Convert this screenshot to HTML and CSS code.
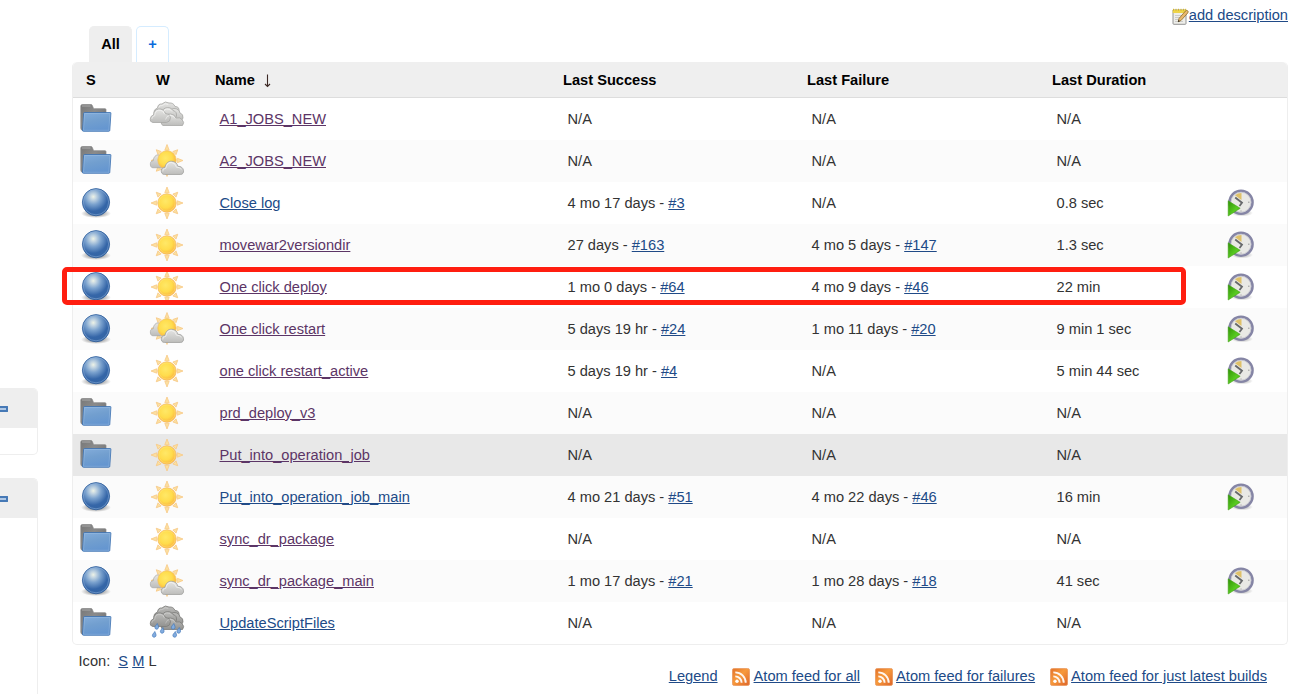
FILE: index.html
```html
<!DOCTYPE html>
<html lang="en">
<head>
<meta charset="utf-8">
<title>Jobs [Jenkins]</title>
<link rel="stylesheet" href="styles.css">
</head>
<body>
<svg class="defs" width="0" height="0" aria-hidden="true">
  <defs>
    <linearGradient id="gBack" x1="0" y1="0" x2="1" y2="1"><stop offset="0" stop-color="#777"/><stop offset=".4" stop-color="#8b8b8b"/><stop offset="1" stop-color="#666"/></linearGradient>
    <linearGradient id="gFront" x1="0" y1="0" x2=".3" y2="1"><stop offset="0" stop-color="#84addb"/><stop offset=".5" stop-color="#729fcf"/><stop offset="1" stop-color="#6596d0"/></linearGradient>
    <radialGradient id="gBall" cx=".4" cy=".3" r=".68"><stop offset="0" stop-color="#eef3e6"/><stop offset=".16" stop-color="#c3d5e2"/><stop offset=".42" stop-color="#7ba2ce"/><stop offset=".78" stop-color="#3566a8"/><stop offset="1" stop-color="#3465a4"/></radialGradient>
    <radialGradient id="gShade"><stop offset="0" stop-color="#000" stop-opacity=".6"/><stop offset="1" stop-color="#000" stop-opacity="0"/></radialGradient>
    <radialGradient id="gSun" cx=".42" cy=".4" r=".6"><stop offset="0" stop-color="#ffe867"/><stop offset=".6" stop-color="#ffdc4c"/><stop offset="1" stop-color="#fbb540"/></radialGradient>
    <linearGradient id="gCloud" x1="0" y1="0" x2="0" y2="1"><stop offset="0" stop-color="#e6e6e4"/><stop offset="1" stop-color="#bdbdbb"/></linearGradient>
    <linearGradient id="gDark" x1="0" y1="0" x2="0" y2="1"><stop offset="0" stop-color="#bdbdbb"/><stop offset="1" stop-color="#929290"/></linearGradient>
    <linearGradient id="gPlay" x1="0" y1="0" x2="1" y2="1"><stop offset="0" stop-color="#2f9404"/><stop offset=".6" stop-color="#59cb22"/><stop offset="1" stop-color="#3c9b12"/></linearGradient>
    <linearGradient id="gRss" x1="0" y1="0" x2="1" y2="1"><stop offset="0" stop-color="#e27129"/><stop offset=".45" stop-color="#f79a3c"/><stop offset="1" stop-color="#dd6329"/></linearGradient>
    <g id="rays" fill="#fce0a0" stroke="#f7c987" stroke-width=".8">
      <path id="ray" d="M-2.200-10.300 0-16 2.200-10.300z"/>
      <path id="ray2" d="M-2.200-10.500 0-15.200 2.200-10.500z" transform="rotate(45)"/><use href="#ray" transform="rotate(90)"/>
      <use href="#ray2" transform="rotate(90)"/><use href="#ray" transform="rotate(180)"/>
      <use href="#ray2" transform="rotate(180)"/><use href="#ray" transform="rotate(270)"/>
      <use href="#ray2" transform="rotate(270)"/>
    </g>
    <path id="puff" d="M4 14C1.500 14 .5 12 .8 9.800 1 7.800 2.500 6.800 4.500 7 5 3 8 .8 11.200 1c3.300.2 5.600 2.200 6.200 5 3-.2 5.200 1.500 5.600 4 .3 2-.6 4-3 4z"/>
    <g id="bank">
      <path d="M5.500 14Q3.500 9 8.500 7 9 2.500 13 3 16-.5 20 2q4.500-.5 6 3.500 4.500 0 4 4.500 1 2-1 4.500z"/>
      <path d="M20 13q0-5 5-5.500 5 0 6 4.500 3.500 1 3 5-.5 3-4 2.500z"/>
      <path d="M13 14q-1-5.500 3.500-7 5-1.500 7.500 2.500 4 1 3.500 5.500-1 4-5 4z"/>
      <path d="M14 24.500q-2.500-1-1.500-4 .5-2.500 3.500-3 1-4.500 5.500-4.500 4 0 5.500 4 4-1 6 1.500 3 3 .5 6z"/>
      <path d="M4 21.500q-3.500-.5-2.500-4.500.5-2.500 3-3Q5 8.500 9.500 8q5-.5 7 4.500 4.500 0 5 4 0 4.500-4 5z"/>
    </g>
    <path id="shine" d="M2.800 18q0-2.800 2.900-3.200Q6 9.700 9.800 9.200q4-.2 5.800 4M14.500 11.500q0-3 3-3.500 4-.5 5.500 2.500M9.800 6.500q1-2.500 3.500-2 3-3 6-1M16.500 18.500q1-4 5-4.200 3 .2 4.500 3" fill="none" stroke="#fff"/>
    <path id="drop" d="M2.800 0C3.600 2 4.600 3.400 3.700 4.900 2.600 6.300.4 5.800.4 4c0-1.500 1.400-2.200 2.400-4z" fill="#82acdf" stroke="#4378b9" stroke-width=".7"/>
  </defs>
  <symbol id="folder" viewBox="0 0 32 32">
    <path d="M.8 3Q.8 1.500 2.300 1.500H11q1 0 1.300 1l1 2.500q.3.700 1 .7H25q1 0 1 1V27H2Q.8 27 .8 25z" fill="url(#gBack)" stroke="#858585" stroke-width=".7"/>
    <path d="M2 3h8.500" stroke="#aaa" fill="none"/>
    <path d="M4.500 9.500H30.300q.7 0 .6.800L29.800 27.300q-.1 1-1 1H3.500q-1.300 0-1-1.300L3.600 10.300q.1-.8.900-.8z" fill="url(#gFront)" stroke="#3b70b0" stroke-width=".8"/>
    <path d="M4.600 10.500H29.900L28.900 27.300H3.500z" fill="none" stroke="#a3c3e7" stroke-opacity=".5" stroke-width=".8"/>
  </symbol>
  <symbol id="ball" viewBox="0 0 32 32">
    <ellipse cx="16" cy="26.500" rx="15" ry="4.500" fill="url(#gShade)"/>
    <circle cx="16" cy="15.200" r="13.600" fill="url(#gBall)" stroke="#2d5d9b" stroke-width=".8"/>
    <circle cx="16" cy="15.200" r="12.600" fill="none" stroke="#8fb2dc" stroke-opacity=".5"/>
  </symbol>
  <symbol id="sun" viewBox="0 0 36 36">
    <use href="#rays" x="18" y="18"/>
    <circle cx="18" cy="18" r="9.200" fill="url(#gSun)" stroke="#f5b85e" stroke-width=".8"/>
    <circle cx="18" cy="18" r="8.200" fill="none" stroke="#ffe784" stroke-opacity=".6" stroke-width=".8"/>
  </symbol>
  <symbol id="partly" viewBox="0 0 36 36">
    <use href="#rays" x="18" y="17.500"/>
    <use href="#puff" transform="translate(.8 11) scale(.75 .98)" fill="url(#gCloud)" stroke="#a5a5a3" stroke-width=".8"/>
    <circle cx="18" cy="17" r="9.200" fill="url(#gSun)" stroke="#f5c35b" stroke-width=".8"/>
    <use href="#puff" transform="translate(11.500 17.200) scale(1 1.020)" fill="url(#gCloud)" stroke="#a0a09e" stroke-width=".8"/>
    <path d="M13.800 28.500q-.5-3 3-3.200 1-6 5.700-5.800 4 .4 5 4.700 3.500-.3 4.800 2.300" fill="none" stroke="#fff" stroke-opacity=".6" stroke-width=".9"/>
  </symbol>
  <symbol id="cloudy" viewBox="0 0 36 36">
    <use href="#bank" fill="url(#gCloud)" stroke="#a8a8a6" stroke-width=".8"/>
    <use href="#shine" opacity=".5"/>
  </symbol>
  <symbol id="rain" viewBox="0 0 36 36">
    <use href="#bank" fill="url(#gDark)" stroke="#7c7c7a" stroke-width=".8"/>
    <use href="#shine" opacity=".25"/>
    <use href="#drop" x="5.500" y="18.500"/><use href="#drop" x="11" y="22.500"/><use href="#drop" x="22" y="18.500"/><use href="#drop" x="27.500" y="22.500"/><use href="#drop" x="3" y="26.500"/><use href="#drop" x="23.500" y="26.500"/>
  </symbol>
  <symbol id="clock" viewBox="0 0 28 28">
    <ellipse cx="15" cy="24" rx="11" ry="3.500" fill="url(#gShade)" opacity=".6"/>
    <circle cx="14" cy="13.200" r="11.500" fill="#e9e9e5" stroke="#8585a5" stroke-width="2.600"/>
    <circle cx="14" cy="13.200" r="10" fill="none" stroke="#c6c6cf" stroke-width=".8"/>
    <path d="M14.500 11 8 6.300Q10.500 4 14.500 4z" fill="#dfc169"/>
    <path d="m8.200 8.500 6.800 5.200-2.500 3.300" fill="none" stroke="#66686a" stroke-width="1.800"/>
    <path d="M21 13.200h1.500M14 21.500v1" stroke="#999"/>
    <path d="M1.200 11.800 13.200 19.300 1.200 27z" fill="url(#gPlay)" stroke="#48a51b" stroke-width=".6"/>
  </symbol>
  <symbol id="rss" viewBox="0 0 18 18">
    <rect x=".4" y=".4" width="17.200" height="17.200" rx="2" fill="url(#gRss)" stroke="#e9965a" stroke-width=".8"/>
    <circle cx="5" cy="13.200" r="1.700" fill="#fff"/>
    <path d="M3.300 8.400a6.300 6.300 0 0 1 6.300 6.300M3.300 4.400a10.400 10.400 0 0 1 10.400 10.400" fill="none" stroke="#fff" stroke-width="1.900" stroke-opacity=".92"/>
  </symbol>
</svg>

<aside class="side">
  <div class="pane short"><div class="pane-head"><i class="collapse"></i></div></div>
  <div class="pane tall"><div class="pane-head"><i class="collapse"></i></div></div>
</aside>

<main class="main">
  <div class="describe">
    <svg width="17" height="17" viewBox="0 0 17 17"><path d="M1 2h13v13.500q0 .8-.8.800H1.800q-.8 0-.8-.8z" fill="#eeeeea" stroke="#888" stroke-width=".9"/><path d="M.7 1.800h13.500V5H.7z" fill="#edd44a"/><path d="M1.500.8v2M4 .8v2M6.500.8v2M9 .8v2M11.500.8v2M13.700.8v2" stroke="#d3b52b"/><path d="M3 7.500h7M3 9.500h5M3 11.500h4M3 13.500h8" stroke="#bbb" stroke-width=".7"/><path d="m6.200 13.800.8-3.300L13.500 3q1.200-1 2.200-.2 1 .9.100 2.100L9.200 12.300z" fill="#e9b96e" stroke="#8f6b26" stroke-width=".8"/><path d="m6 14 .5-2 1.400 1.200z" fill="#222"/></svg><a href="#">add description</a>
  </div>
  <nav class="tabs"><a class="tab active">All</a><a class="tab add">+</a></nav>
  <section class="jobs">
    <div class="row head"><b>S</b><b>W</b><b>Name&nbsp; <svg class="sort" width="9" height="14" viewBox="0 0 9 14"><path d="M4.500.5v12M2 10l2.500 2.500L7 10" fill="none" stroke="#3d2925" stroke-width="1.100"/></svg></b><b>Last Success</b><b>Last Failure</b><b>Last Duration</b><b></b></div>
    <div class="row"><svg class="s"><use href="#folder"/></svg><svg class="w"><use href="#cloudy"/></svg><span><a class="seen" href="#">A1_JOBS_NEW</a></span><span>N/A</span><span>N/A</span><span>N/A</span></div>
    <div class="row"><svg class="s"><use href="#folder"/></svg><svg class="w"><use href="#partly"/></svg><span><a class="seen" href="#">A2_JOBS_NEW</a></span><span>N/A</span><span>N/A</span><span>N/A</span></div>
    <div class="row"><svg class="s"><use href="#ball"/></svg><svg class="w"><use href="#sun"/></svg><span><a href="#">Close log</a></span><span>4 mo 17 days - <a href="#">#3</a></span><span>N/A</span><span>0.8 sec</span><svg class="c"><use href="#clock"/></svg></div>
    <div class="row"><svg class="s"><use href="#ball"/></svg><svg class="w"><use href="#sun"/></svg><span><a class="seen" href="#">movewar2versiondir</a></span><span>27 days - <a href="#">#163</a></span><span>4 mo 5 days - <a href="#">#147</a></span><span>1.3 sec</span><svg class="c"><use href="#clock"/></svg></div>
    <div class="row marked"><svg class="s"><use href="#ball"/></svg><svg class="w"><use href="#sun"/></svg><span><a class="seen" href="#">One click deploy</a></span><span>1 mo 0 days - <a href="#">#64</a></span><span>4 mo 9 days - <a href="#">#46</a></span><span>22 min</span><svg class="c"><use href="#clock"/></svg></div>
    <div class="row"><svg class="s"><use href="#ball"/></svg><svg class="w"><use href="#partly"/></svg><span><a class="seen" href="#">One click restart</a></span><span>5 days 19 hr - <a href="#">#24</a></span><span>1 mo 11 days - <a href="#">#20</a></span><span>9 min 1 sec</span><svg class="c"><use href="#clock"/></svg></div>
    <div class="row"><svg class="s"><use href="#ball"/></svg><svg class="w"><use href="#sun"/></svg><span><a class="seen" href="#">one click restart_active</a></span><span>5 days 19 hr - <a href="#">#4</a></span><span>N/A</span><span>5 min 44 sec</span><svg class="c"><use href="#clock"/></svg></div>
    <div class="row"><svg class="s"><use href="#folder"/></svg><svg class="w"><use href="#sun"/></svg><span><a class="seen" href="#">prd_deploy_v3</a></span><span>N/A</span><span>N/A</span><span>N/A</span></div>
    <div class="row hover"><svg class="s"><use href="#folder"/></svg><svg class="w"><use href="#sun"/></svg><span><a class="seen" href="#">Put_into_operation_job</a></span><span>N/A</span><span>N/A</span><span>N/A</span></div>
    <div class="row"><svg class="s"><use href="#ball"/></svg><svg class="w"><use href="#sun"/></svg><span><a href="#">Put_into_operation_job_main</a></span><span>4 mo 21 days - <a href="#">#51</a></span><span>4 mo 22 days - <a href="#">#46</a></span><span>16 min</span><svg class="c"><use href="#clock"/></svg></div>
    <div class="row"><svg class="s"><use href="#folder"/></svg><svg class="w"><use href="#sun"/></svg><span><a class="seen" href="#">sync_dr_package</a></span><span>N/A</span><span>N/A</span><span>N/A</span></div>
    <div class="row"><svg class="s"><use href="#ball"/></svg><svg class="w"><use href="#partly"/></svg><span><a class="seen" href="#">sync_dr_package_main</a></span><span>1 mo 17 days - <a href="#">#21</a></span><span>1 mo 28 days - <a href="#">#18</a></span><span>41 sec</span><svg class="c"><use href="#clock"/></svg></div>
    <div class="row"><svg class="s"><use href="#folder"/></svg><svg class="w"><use href="#rain"/></svg><span><a href="#">UpdateScriptFiles</a></span><span>N/A</span><span>N/A</span><span>N/A</span></div>
  </section>
  <footer class="foot">
    <div class="sizes">Icon: &nbsp;<a href="#">S</a> <a href="#">M</a> L</div>
    <div class="feeds"><a href="#">Legend</a><span class="feed"><svg><use href="#rss"/></svg><a href="#">Atom feed for all</a></span><span class="feed"><svg><use href="#rss"/></svg><a href="#">Atom feed for failures</a></span><span class="feed"><svg><use href="#rss"/></svg><a href="#">Atom feed for just latest builds</a></span></div>
  </footer>
</main>
</body>
</html>
```
FILE: styles.css
```css
*, *::after { box-sizing: border-box; }
body {
  margin: 0;
  height: 694px;
  overflow: hidden;
  display: flex;
  background: #fff;
  color: #333;
  font: 14.63px/20px "Liberation Sans", Arial, sans-serif;
}
a { color: #204a87; text-decoration: underline; }
a.seen { color: #5c3566; }
svg { display: block; flex: none; }
.defs { position: absolute; }

.side { width: 72px; flex: none; padding-top: 388px; }
.pane { width: 38px; border: 1px solid #eee; border-left: 0; border-radius: 0 5px 5px 0; overflow: hidden; }
.short { height: 67px; margin-bottom: 23px; }
.tall { height: 216px; border-bottom: 0; border-radius: 0 5px 0 0; }
.pane-head { height: 39px; background: #eee; border-bottom: 1px solid #eee; padding-top: 17px; }
.collapse { display: block; width: 8px; height: 6px; background: #b0c8e5; border: 2px solid #4679b6; border-left: 0; border-radius: 0 1px 1px 0; }

.main { width: 1216px; }
.describe { height: 26px; display: flex; justify-content: flex-end; padding-top: 5px; }
.describe svg { margin-top: 3px; }
.tabs { height: 36px; display: flex; gap: 4px; padding-left: 17px; }
.tab { height: 36px; border: 1px solid #eee; border-bottom: 0; border-radius: 5px 5px 0 0; text-align: center; font-weight: bold; line-height: 35px; text-decoration: none; }
.active { width: 43px; background: #eee; color: #000; }
.add { width: 33px; border-color: #d5ecff; color: #0b6adb; }

.jobs { height: 583px; border: 1px solid #eee; border-top: 0; border-radius: 5px; }
.row { height: 42px; display: grid; grid-template-columns: 70px 70.5px 348px 244px 245px 170px 1fr; align-items: center; padding-left: 6px; }
.row:nth-child(odd) { background: #fbfbfb; }
.row.head { height: 36px; background: #efefef; border-bottom: 1px solid #ddd; color: #000; border-radius: 5px 5px 0 0; padding-left: 7px; }
.head b:nth-child(-n+2) { padding-left: 6px; }
.head b:nth-child(n+3) { margin-left: -5.5px; }
.sort { display: inline-block; vertical-align: -3px; }
.row.hover { background: #e8e8e8; }
.s { width: 32px; height: 32px; margin-left: 1px; }
.w { width: 36px; height: 36px; }
.c { width: 28px; height: 28px; }
.marked { position: relative; }
.marked::after { content: ""; position: absolute; left: -11px; top: 1px; width: 1124px; height: 38px; border: 5px solid #ff1e10; border-radius: 5px; }

.foot { display: flex; justify-content: space-between; padding: 6px 21px 0 6.5px; }
.feeds { display: flex; padding-top: 15px; gap: 14.5px; }
.feed { display: flex; gap: 3.500px; }
.feed svg { width: 18px; height: 18px; margin-top: 2px; }
```
